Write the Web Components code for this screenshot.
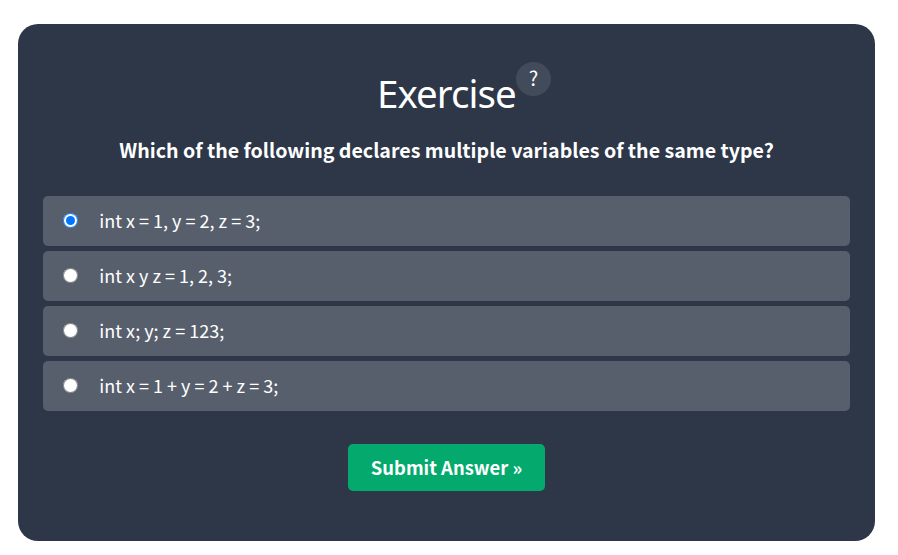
<!DOCTYPE html>
<html lang="en">
<head>
<meta charset="utf-8">
<title>Exercise</title>
<style>
html,body{margin:0;background:#fff}
body{height:555px;overflow:hidden;font-family:"Noto Sans CJK SC","Noto Sans",sans-serif;color:#fff}
</style>
</head>
<body>
<exercise-card>
  <exercise-title slot="title">Exercise</exercise-title>
  <exercise-question slot="question">Which of the following declares multiple variables of the same type?</exercise-question>
  <answer-option checked>int x = 1, y = 2, z = 3;</answer-option>
  <answer-option>int x y z = 1, 2, 3;</answer-option>
  <answer-option>int x; y; z = 123;</answer-option>
  <answer-option>int x = 1 + y = 2 + z = 3;</answer-option>
  <submit-button slot="action">Submit Answer »</submit-button>
</exercise-card>
<script>
const define = (name, html, setup) => customElements.define(name, class extends HTMLElement {
  constructor() {
    super();
    this.attachShadow({ mode: 'open' }).innerHTML = html;
  }
  connectedCallback() { if (setup) setup(this); }
});

define('exercise-card', `
<style>
:host{display:flex;flex-direction:column;align-items:center;box-sizing:border-box;width:857px;height:517px;margin:24px 0 0 18px;padding:38px 25px 0;border-radius:20px;background:#2d3748}
.options{display:grid;gap:5px;width:100%;margin-top:31px}
.action{margin-top:33px}
</style>
<slot name="title"></slot>
<slot name="question"></slot>
<div class="options"><slot></slot></div>
<div class="action"><slot name="action"></slot></div>`);

define('exercise-title', `
<style>
:host{display:flex;align-items:flex-start;height:70px;margin-left:36px;font-family:"Noto Sans","Open Sans",sans-serif}
h1{width:138px;margin:5px 0 0;font-size:38.5px;line-height:53px;font-weight:400;letter-spacing:-.95px;white-space:nowrap;text-indent:-1px}
.help{display:block;width:35px;height:34px;border-radius:50%;background:#424b5a;text-align:center;font:400 20px/32px "Noto Sans CJK SC",sans-serif}
</style>
<h1><slot></slot></h1><span class="help">?</span>`);

define('exercise-question', `
<style>
:host{display:block;height:33px;line-height:36px;font-size:19.6px;font-weight:700;white-space:nowrap}
</style>
<slot></slot>`);

define('answer-option', `
<style>
:host{display:block}
label{display:flex;align-items:center;height:50px;box-sizing:border-box;padding-left:20px;border-radius:5px;background:#575f6d;font-size:18px;line-height:50px;white-space:nowrap}
input{width:15px;height:15px;margin:0 21.3px 2px 0}
span{display:block;height:50px;line-height:48px}
</style>
<label><input type="radio"><span><slot></slot></span></label>`,
el => { el.shadowRoot.querySelector('input').checked = el.hasAttribute('checked'); });

define('submit-button', `
<style>
:host{display:block}
button{display:block;width:197px;height:47px;padding:0;border:0;border-radius:5px;background:#04aa6d;color:#fff;font:700 18.4px/47px "Noto Sans CJK SC",sans-serif;white-space:nowrap}
</style>
<button><slot></slot></button>`);
</script>
</body>
</html>
